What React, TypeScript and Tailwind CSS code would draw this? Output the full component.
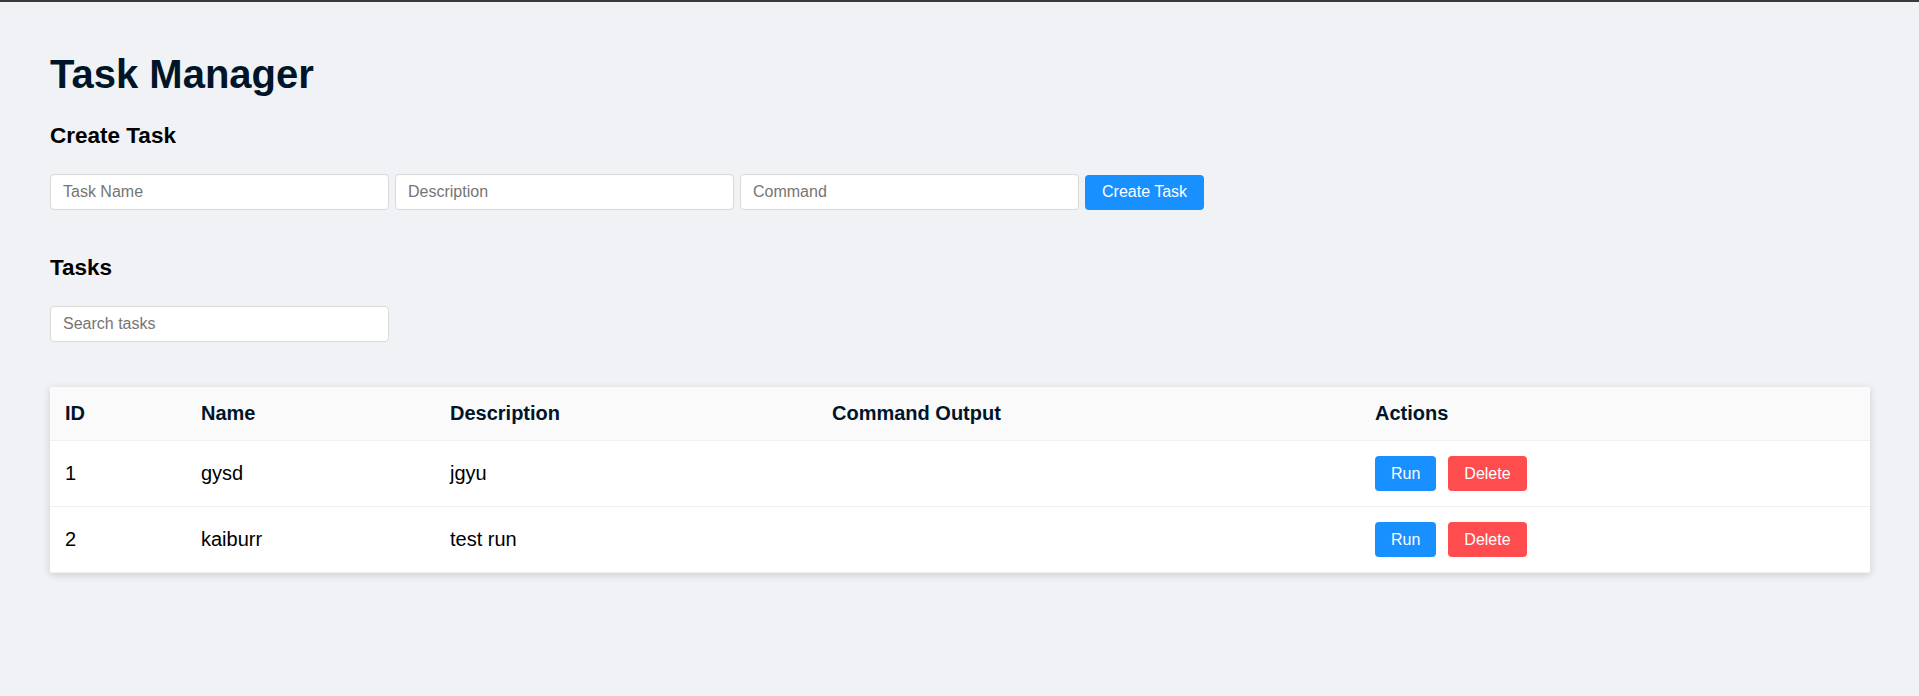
import React from "react";

type Task = { id: number; name: string; description: string; output: string };

const tasks: Task[] = [
  { id: 1, name: "gysd", description: "jgyu", output: "" },
  { id: 2, name: "kaiburr", description: "test run", output: "" },
];

export default function App() {
  return (
    <div
      className="min-h-screen w-full bg-[#f0f2f5]"
      style={{ fontFamily: '"Liberation Sans", Arial, sans-serif' }}
    >
      <div className="h-[2px] w-full bg-[#3a3a3a]" />
      <div className="pl-[50px] pr-[49px] pt-[49px] pb-10">
        <h1 className="text-[40px] leading-[46px] font-bold text-[#001529]">Task Manager</h1>

        <h3 className="mt-[26px] text-[22.5px] leading-[26px] font-bold text-black">Create Task</h3>

        <div className="mt-[25px] flex items-center gap-[6px]">
          <input
            placeholder="Task Name"
            className="h-[36px] w-[339px] rounded-[4px] border border-[#d9d9d9] bg-white px-[12px] text-[16px] text-black outline-none placeholder:text-[#757575]"
          />
          <input
            placeholder="Description"
            className="h-[36px] w-[339px] rounded-[4px] border border-[#d9d9d9] bg-white px-[12px] text-[16px] text-black outline-none placeholder:text-[#757575]"
          />
          <input
            placeholder="Command"
            className="h-[36px] w-[339px] rounded-[4px] border border-[#d9d9d9] bg-white px-[12px] text-[16px] text-black outline-none placeholder:text-[#757575]"
          />
          <button className="h-[35px] rounded-[4px] bg-[#1890ff] px-[17px] text-[16px] text-white">
            Create Task
          </button>
        </div>

        <h3 className="mt-[45px] text-[22.5px] leading-[26px] font-bold text-black">Tasks</h3>

        <div className="mt-[25px]">
          <input
            placeholder="Search tasks"
            className="h-[36px] w-[339px] rounded-[4px] border border-[#d9d9d9] bg-white px-[12px] text-[16px] text-black outline-none placeholder:text-[#757575]"
          />
        </div>

        <table className="mt-[45px] w-full table-fixed border-collapse bg-white shadow-[0_2px_8px_rgba(0,0,0,0.15)]">
          <colgroup>
            <col className="w-[136px]" />
            <col className="w-[249px]" />
            <col className="w-[382px]" />
            <col className="w-[543px]" />
            <col />
          </colgroup>
          <thead>
            <tr className="bg-[#fafafa]">
              {["ID", "Name", "Description", "Command Output", "Actions"].map((h) => (
                <th
                  key={h}
                  className="border-b border-[#f0f0f0] p-[15px] text-left text-[20px] leading-[23px] font-bold text-[#001529]"
                >
                  {h}
                </th>
              ))}
            </tr>
          </thead>
          <tbody>
            {tasks.map((t) => (
              <tr key={t.id}>
                <td className="border-b border-[#f0f0f0] p-[15px] text-[20px] leading-[23px] text-black">{t.id}</td>
                <td className="border-b border-[#f0f0f0] p-[15px] text-[20px] leading-[23px] text-black">{t.name}</td>
                <td className="border-b border-[#f0f0f0] p-[15px] text-[20px] leading-[23px] text-black">{t.description}</td>
                <td className="border-b border-[#f0f0f0] p-[15px] text-[20px] leading-[23px] text-black">{t.output}</td>
                <td className="border-b border-[#f0f0f0] p-[15px]">
                  <div className="flex items-center gap-[12px]">
                    <button className="h-[35px] rounded-[4px] bg-[#1890ff] px-4 text-[16px] text-white">Run</button>
                    <button className="h-[35px] rounded-[4px] bg-[#ff4d4f] px-4 text-[16px] text-white">Delete</button>
                  </div>
                </td>
              </tr>
            ))}
          </tbody>
        </table>
      </div>
    </div>
  );
}
